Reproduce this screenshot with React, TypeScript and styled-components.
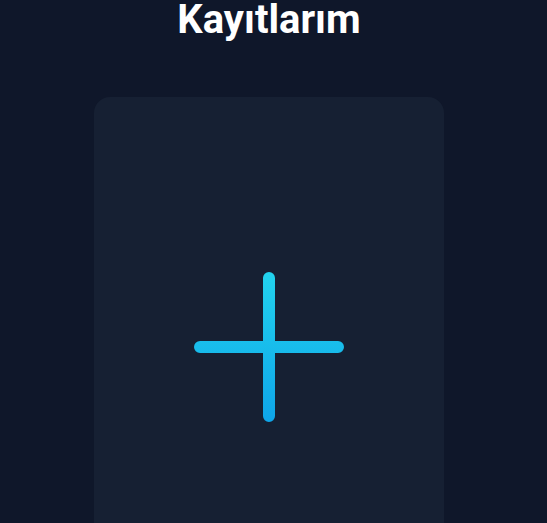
import React from "react";
import styled, { createGlobalStyle } from "styled-components";

const Global = createGlobalStyle`
  html, body {
    margin: 0;
    padding: 0;
    background: #0f172a;
    font-family: Roboto, "Noto Sans", sans-serif;
  }
  body { overflow: hidden; }
`;

const Page = styled.main`
  display: flex;
  flex-direction: column;
  align-items: center;
  min-height: 523px;
  padding-right: 9px;
  background: #0f172a;
`;

const Title = styled.h1`
  margin: 0;
  font-family: Roboto, sans-serif;
  font-weight: 700;
  font-size: 40px;
  line-height: 40px;
  color: #ffffff;
`;

const Card = styled.button`
  margin-top: 57px;
  width: 350px;
  height: 500px;
  border: none;
  border-radius: 16px;
  background: rgba(30, 41, 59, 0.5);
  display: flex;
  align-items: center;
  justify-content: center;
  cursor: pointer;
  padding: 0;
`;

const PlusIcon = () => (
  <svg width="150" height="150" viewBox="0 0 150 150" fill="none">
    <defs>
      <linearGradient id="plusGrad" x1="0" y1="0" x2="0" y2="150" gradientUnits="userSpaceOnUse">
        <stop offset="0" stopColor="#22d3ee" />
        <stop offset="1" stopColor="#0ea5e9" />
      </linearGradient>
    </defs>
    <path d="M75 6 V144 M6 75 H144" stroke="url(#plusGrad)" strokeWidth="12" strokeLinecap="round" />
  </svg>
);

export default function App() {
  return (
    <>
      <Global />
      <Page>
        <Title>Kayıtlarım</Title>
        <Card aria-label="Yeni kayıt ekle">
          <PlusIcon />
        </Card>
      </Page>
    </>
  );
}
